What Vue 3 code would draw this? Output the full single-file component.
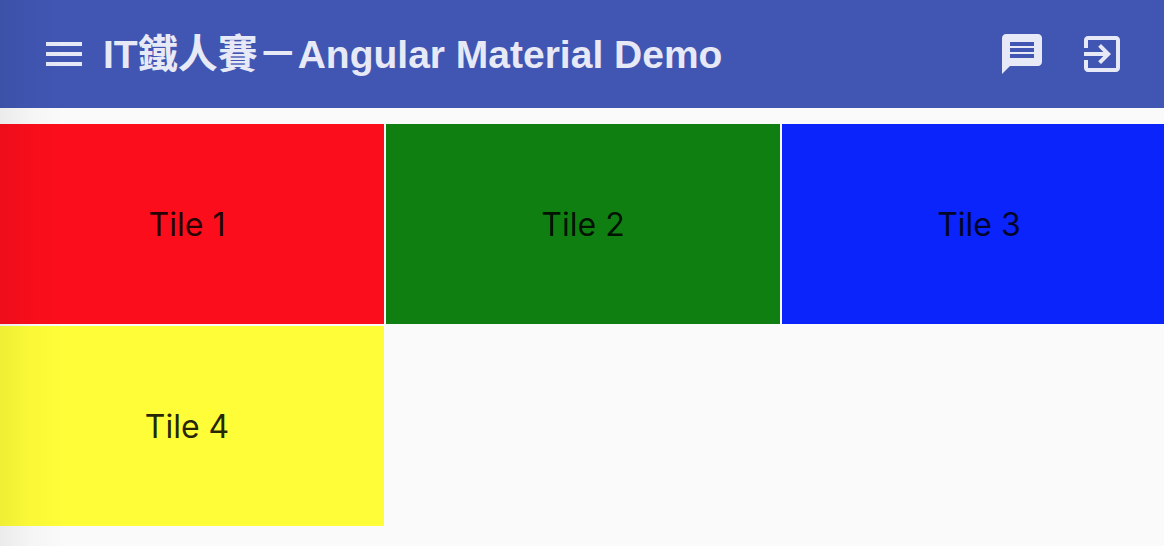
<script setup>
const tiles = [
  { label: 'Tile 1', tone: 'red' },
  { label: 'Tile 2', tone: 'green' },
  { label: 'Tile 3', tone: 'blue' },
  { label: 'Tile 4', tone: 'yellow' },
]
</script>

<template>
  <div class="page">
    <header class="toolbar">
      <button class="icon-button" type="button" aria-label="Menu">
        <svg viewBox="0 0 24 24" aria-hidden="true">
          <path d="M3 18h18v-2H3v2zm0-5h18v-2H3v2zm0-7v2h18V6H3z" />
        </svg>
      </button>
      <h1 class="title">IT<span class="han" lang="zh-Hant">鐵人賽－</span>Angular Material Demo</h1>
      <div class="actions">
        <button class="icon-button" type="button" aria-label="Messages">
          <svg viewBox="0 0 24 24" aria-hidden="true">
            <path d="M20 2H4c-1.100 0-1.990.9-1.990 2L2 22l4-4h14c1.100 0 2-.9 2-2V4c0-1.100-.9-2-2-2zm-2 12H6v-2h12v2zm0-3H6V9h12v2zm0-3H6V6h12v2z" />
          </svg>
        </button>
        <button class="icon-button" type="button" aria-label="Sign out">
          <svg viewBox="0 0 24 24" aria-hidden="true">
            <path d="M10.090 15.590L11.500 17l5-5-5-5-1.410 1.410L12.670 11H3v2h9.670l-2.580 2.590zM19 3H5c-1.110 0-2 .9-2 2v4h2V5h14v14H5v-4H3v4c0 1.100.89 2 2 2h14c1.100 0 2-.9 2-2V5c0-1.100-.9-2-2-2z" />
          </svg>
        </button>
      </div>
    </header>
    <main class="content">
      <ul class="grid">
        <li v-for="tile in tiles" :key="tile.label" class="tile" :class="tile.tone">{{ tile.label }}</li>
      </ul>
    </main>
  </div>
</template>

<style>
body {
  background: #fafafa;
}
</style>

<style scoped>
.page {
  position: relative;
  min-height: 100vh;
  overflow: hidden;
  background: #fafafa;
}

.page::after {
  content: '';
  position: absolute;
  top: 0;
  bottom: 0;
  left: 0;
  width: 64px;
  background: linear-gradient(to right, rgba(0, 0, 0, 0.06), rgba(0, 0, 0, 0.02) 50%, rgba(0, 0, 0, 0));
  pointer-events: none;
}

.toolbar {
  display: flex;
  align-items: center;
  box-sizing: border-box;
  height: 108px;
  padding: 0 38px 0 40px;
  background: #4056b2;
  color: #e7e9f6;
}

.icon-button {
  display: block;
  flex: none;
  width: 48px;
  height: 48px;
  padding: 0;
  border: 0;
  background: none;
  color: inherit;
  cursor: pointer;
}

.icon-button svg {
  display: block;
  width: 48px;
  height: 48px;
  fill: currentColor;
}

.title {
  flex: 1;
  margin: 0 0 0 15px;
  font-family: 'Liberation Sans', 'Noto Sans CJK TC', sans-serif;
  font-size: 39px;
  font-weight: 700;
  line-height: 48px;
  white-space: nowrap;
}

.han {
  font-size: 40px;
}

.actions {
  display: flex;
  gap: 32px;
}

.content {
  padding: 16px 0 20px;
}

/* The grid bleeds past both sides of the page */
.grid {
  display: grid;
  grid-template-columns: repeat(3, 1fr);
  grid-auto-rows: 200px;
  gap: 2px;
  margin: 0 -12px 0 -10px;
  padding: 0;
  list-style: none;
}

.tile {
  display: flex;
  align-items: center;
  justify-content: center;
  padding-top: 2px;
  color: rgba(0, 0, 0, 0.87);
  font-family: Inter, sans-serif;
  font-size: 32px;
  line-height: 48px;
}

.red {
  background: #fc0d1b;
}

.green {
  background: #107f12;
}

.blue {
  background: #0b24fb;
}

.yellow {
  background: #fffd38;
}
</style>
